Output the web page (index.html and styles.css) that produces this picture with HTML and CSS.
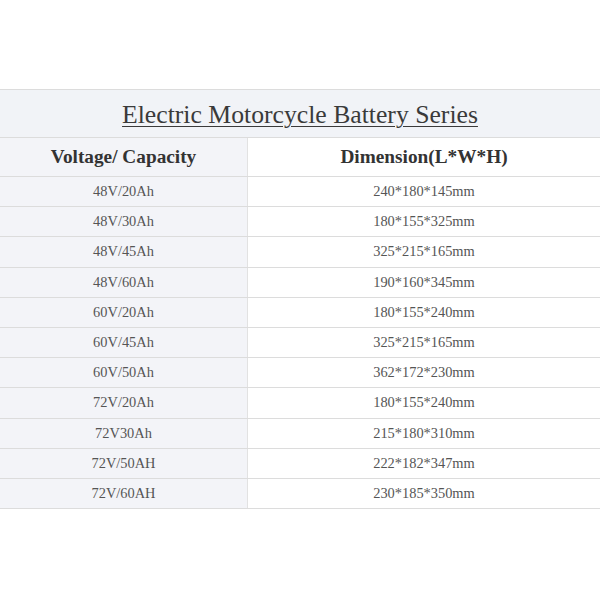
FILE: index.html
```html
<!DOCTYPE html>
<html>
<head>
<meta charset="utf-8">
<link rel="stylesheet" href="styles.css">
</head>
<body>
<div class="page">
<table class="spec">
<thead>
<tr><th colspan="2" class="title"><u>Electric Motorcycle Battery Series</u></th></tr>
<tr class="head"><th class="c1">Voltage/ Capacity</th><th class="c2">Dimension(L*W*H)</th></tr>
</thead>
<tbody>
<tr><td class="c1">48V/20Ah</td><td class="c2">240*180*145mm</td></tr>
<tr><td class="c1">48V/30Ah</td><td class="c2">180*155*325mm</td></tr>
<tr><td class="c1">48V/45Ah</td><td class="c2">325*215*165mm</td></tr>
<tr><td class="c1">48V/60Ah</td><td class="c2">190*160*345mm</td></tr>
<tr><td class="c1">60V/20Ah</td><td class="c2">180*155*240mm</td></tr>
<tr><td class="c1">60V/45Ah</td><td class="c2">325*215*165mm</td></tr>
<tr><td class="c1">60V/50Ah</td><td class="c2">362*172*230mm</td></tr>
<tr><td class="c1">72V/20Ah</td><td class="c2">180*155*240mm</td></tr>
<tr><td class="c1">72V30Ah</td><td class="c2">215*180*310mm</td></tr>
<tr><td class="c1">72V/50AH</td><td class="c2">222*182*347mm</td></tr>
<tr><td class="c1">72V/60AH</td><td class="c2">230*185*350mm</td></tr>
</tbody>
</table>
</div>
</body>
</html>
```

FILE: styles.css
```css
html, body {
  margin: 0;
  padding: 0;
  background: #ffffff;
}
.page {
  width: 600px;
  height: 600px;
  padding-top: 89px;
  box-sizing: border-box;
}
.spec {
  width: 600px;
  border-collapse: collapse;
  font-family: "Liberation Serif", "Times New Roman", serif;
  color: #555555;
}
.spec th, .spec td {
  border-top: 1px solid #dcdcdc;
  border-bottom: 1px solid #dcdcdc;
  padding: 0;
  text-align: center;
}
.title {
  height: 48px;
  padding-top: 3px !important;
  box-sizing: border-box;
  background: #f1f3f7;
  font-size: 25.7px;
  font-weight: normal;
  color: #3a3a3a;
}
.title u {
  text-decoration-thickness: 1px;
  text-underline-offset: 3px;
}
.head th {
  height: 38px;
  font-size: 19.3px;
  font-weight: bold;
  color: #333333;
}
.spec td {
  height: 29.2px;
  font-size: 14.4px;
}
.c1 {
  width: 247px;
  background: #f3f4f8;
  border-right: 1px solid #e2e2e2;
}
.c2 {
  background: #ffffff;
}
```
